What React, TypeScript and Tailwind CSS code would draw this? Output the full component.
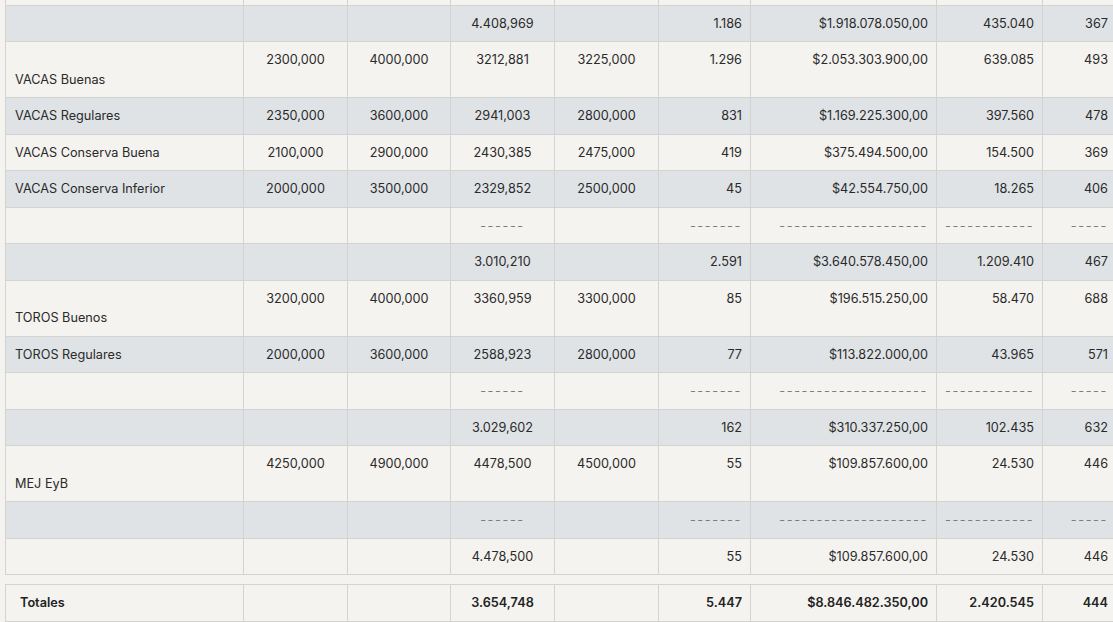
import React from 'react';

type Row = {
  name?: string;
  tall?: boolean;
  dashes?: boolean;
  c: string[];
};

const rows: Row[] = [
  { c: ['', '', '4.408,969', '', '1.186', '$1.918.078.050,00', '435.040', '367'] },
  { name: 'VACAS Buenas', tall: true, c: ['2300,000', '4000,000', '3212,881', '3225,000', '1.296', '$2.053.303.900,00', '639.085', '493'] },
  { name: 'VACAS Regulares', c: ['2350,000', '3600,000', '2941,003', '2800,000', '831', '$1.169.225.300,00', '397.560', '478'] },
  { name: 'VACAS Conserva Buena', c: ['2100,000', '2900,000', '2430,385', '2475,000', '419', '$375.494.500,00', '154.500', '369'] },
  { name: 'VACAS Conserva Inferior', c: ['2000,000', '3500,000', '2329,852', '2500,000', '45', '$42.554.750,00', '18.265', '406'] },
  { dashes: true, c: [] },
  { c: ['', '', '3.010,210', '', '2.591', '$3.640.578.450,00', '1.209.410', '467'] },
  { name: 'TOROS Buenos', tall: true, c: ['3200,000', '4000,000', '3360,959', '3300,000', '85', '$196.515.250,00', '58.470', '688'] },
  { name: 'TOROS Regulares', c: ['2000,000', '3600,000', '2588,923', '2800,000', '77', '$113.822.000,00', '43.965', '571'] },
  { dashes: true, c: [] },
  { c: ['', '', '3.029,602', '', '162', '$310.337.250,00', '102.435', '632'] },
  { name: 'MEJ EyB', tall: true, c: ['4250,000', '4900,000', '4478,500', '4500,000', '55', '$109.857.600,00', '24.530', '446'] },
  { dashes: true, c: [] },
  { c: ['', '', '4.478,500', '', '55', '$109.857.600,00', '24.530', '446'] },
];

const dashCells = ['', '', '------', '', '-------', '--------------------', '------------', '-----'];

const widths = ['w-[238px]', 'w-[104px]', 'w-[103px]', 'w-[104px]', 'w-[104px]', 'w-[92px]', 'w-[186px]', 'w-[106px]', 'w-[74px]'];

// columns 1-4 are centred, the rest right aligned
const align = (i: number) => (i < 4 ? 'text-center px-0' : 'text-right');

const Cols = () => (
  <colgroup>
    {widths.map((w, i) => (
      <col key={i} className={w} />
    ))}
  </colgroup>
);

const cell = 'border border-[#d3d3d1] px-2 py-2 leading-[19.5px] align-top whitespace-nowrap';

export default function App() {
  return (
    <div
      className="w-[1113px] h-[622px] overflow-hidden bg-[#f4f3ef] pl-[5px] text-[12.7px] text-[#2a2a2a]"
      style={{ fontFamily: 'Inter, "Noto Sans", sans-serif' }}
    >
      <table className="table-fixed border-collapse w-[1111px]">
        <Cols />
        <tbody>
          <tr className="h-[5px] bg-[#f4f3ef]">
            {widths.map((_, i) => (
              <td key={i} className="border-x border-b border-[#d3d3d1] p-0" />
            ))}
          </tr>
          {rows.map((r, ri) => (
            <tr key={ri} className={ri % 2 === 0 ? 'bg-[#dfe3e6]' : 'bg-[#f4f3ef]'}>
              <td className={`${cell} pl-[9px] text-left`}>
                {r.tall && <br />}
                {r.name}
              </td>
              {(r.dashes ? dashCells : r.c).map((v, i) => (
                <td
                  key={i}
                  className={`${cell} ${align(i)} ${r.dashes ? 'text-[#7d7d7d] tracking-[1.6px]' : ''}`}
                >
                  {v}
                </td>
              ))}
            </tr>
          ))}
        </tbody>
      </table>

      <table className="table-fixed border-collapse w-[1111px] mt-[9px]">
        <Cols />
        <tbody>
          <tr className="bg-[#f4f3ef] font-semibold text-[#222]">
            <td className={`${cell} pl-[14px] text-left`}>Totales</td>
            {['', '', '3.654,748', '', '5.447', '$8.846.482.350,00', '2.420.545', '444'].map((v, i) => (
              <td key={i} className={`${cell} ${align(i)}`}>
                {v}
              </td>
            ))}
          </tr>
        </tbody>
      </table>
    </div>
  );
}
